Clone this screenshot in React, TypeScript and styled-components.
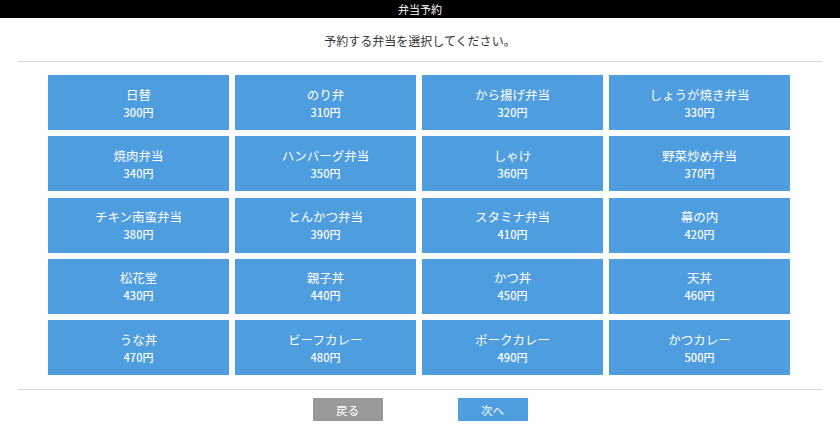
import React from 'react'
import styled, { createGlobalStyle } from 'styled-components'

const GlobalStyle = createGlobalStyle`
body {
    margin: 0;
    background: #fff;
    font-family: "Noto Sans CJK JP", "Noto Sans", sans-serif;
}
`

const bentos = [
    { name: '日替', price: 300 },
    { name: 'のり弁', price: 310 },
    { name: 'から揚げ弁当', price: 320 },
    { name: 'しょうが焼き弁当', price: 330 },
    { name: '焼肉弁当', price: 340 },
    { name: 'ハンバーグ弁当', price: 350 },
    { name: 'しゃけ', price: 360 },
    { name: '野菜炒め弁当', price: 370 },
    { name: 'チキン南蛮弁当', price: 380 },
    { name: 'とんかつ弁当', price: 390 },
    { name: 'スタミナ弁当', price: 410 },
    { name: '幕の内', price: 420 },
    { name: '松花堂', price: 430 },
    { name: '親子丼', price: 440 },
    { name: 'かつ丼', price: 450 },
    { name: '天丼', price: 460 },
    { name: 'うな丼', price: 470 },
    { name: 'ビーフカレー', price: 480 },
    { name: 'ポークカレー', price: 490 },
    { name: 'かつカレー', price: 500 },
]

const App: React.FC = () => {
    return (
        <Page>
            <GlobalStyle />
            <TitleBar>弁当予約</TitleBar>
            <Lead>予約する弁当を選択してください。</Lead>
            <Divider />
            <Menu>
                {bentos.map((b) => (
                    <Card key={b.name}>
                        <CardName>{b.name}</CardName>
                        <CardPrice>{b.price}円</CardPrice>
                    </Card>
                ))}
            </Menu>
            <Divider />
            <Actions>
                <ActionButton variant={'back'}>戻る</ActionButton>
                <ActionButton variant={'next'}>次へ</ActionButton>
            </Actions>
        </Page>
    )
}

export default App

const Page = styled.div`
width: 840px;
height: 441px;
overflow: hidden;
`

const TitleBar = styled.div`
height: 18px;
line-height: 18px;
background: #000;
color: #fff;
font-size: 11px;
text-align: center;
`

const Lead = styled.div`
height: 43px;
line-height: 46px;
font-size: 12px;
color: #333;
text-align: center;
`

const Divider = styled.hr`
margin: 0 18px;
border: none;
border-top: 1px solid #d8d8d8;
`

const Menu = styled.div`
display: grid;
grid-template-columns: repeat(4, 181px);
grid-auto-rows: 55px;
column-gap: 6px;
row-gap: 6.25px;
padding: 13px 0 14px 48px;
`

const Card = styled.div`
display: flex;
flex-direction: column;
align-items: center;
justify-content: center;
background: #4e9ddf;
color: #fff;
cursor: pointer;
padding-top: 1px;
`

const CardName = styled.div`
font-size: 12.5px;
line-height: 18px;
font-weight: 400;
`

const CardPrice = styled.div`
font-size: 11px;
line-height: 17px;
font-weight: 500;
`

const Actions = styled.div`
display: flex;
justify-content: center;
gap: 75px;
padding-top: 8px;
`

const ActionButton = styled.button<{ variant: 'back' | 'next' }>`
width: 70px;
height: 23px;
border: none;
padding: 0;
font-family: inherit;
font-size: 11.5px;
color: #fff;
background: ${(p) => (p.variant === 'back' ? '#999999' : '#4e9ddf')};
cursor: pointer;
`
